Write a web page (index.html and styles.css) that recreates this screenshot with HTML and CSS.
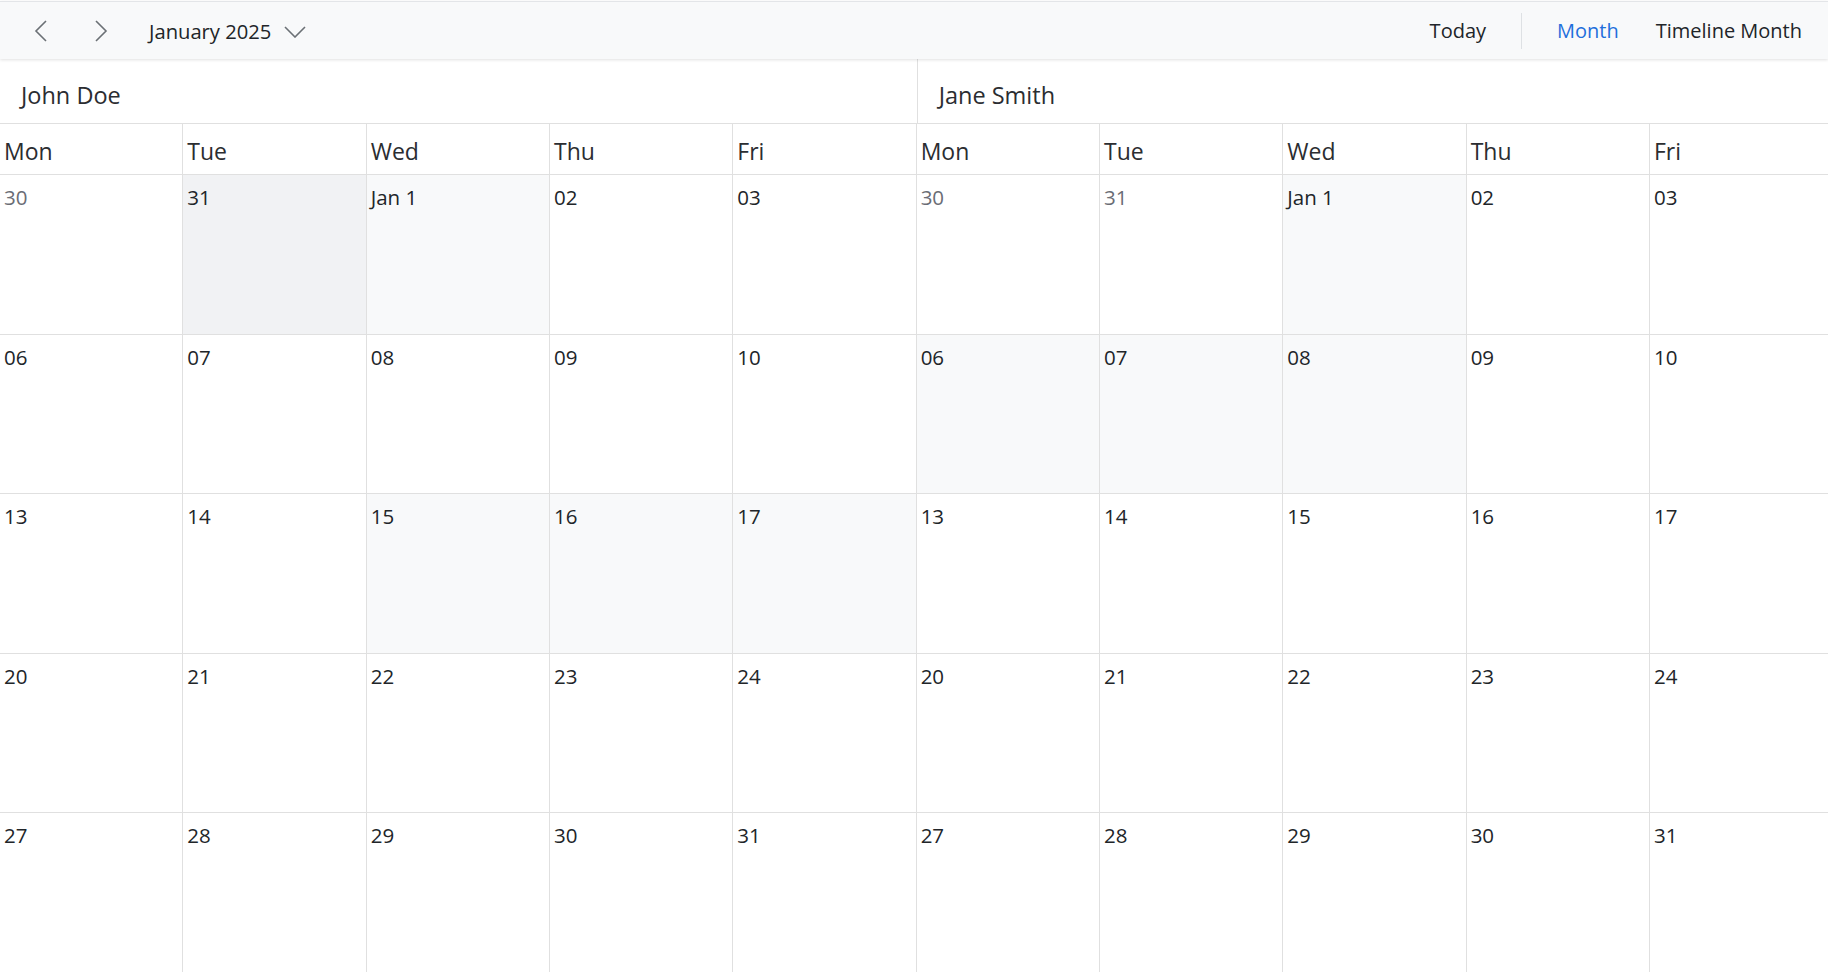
FILE: index.html
```html
<!DOCTYPE html>
<html>
<head>
<meta charset="utf-8">
<link rel="stylesheet" href="styles.css">
</head>
<body>
<div class="toolbar">
  <div class="tb-left">
    <button class="icon-btn" aria-label="Previous">
      <svg width="14" height="22" viewBox="0 0 14 22"><path d="M12 1 L2 11 L12 21" fill="none" stroke="#6b7075" stroke-width="1.6"/></svg>
    </button>
    <button class="icon-btn" aria-label="Next">
      <svg width="14" height="22" viewBox="0 0 14 22"><path d="M2 1 L12 11 L2 21" fill="none" stroke="#6b7075" stroke-width="1.6"/></svg>
    </button>
    <button class="date-btn">January 2025
      <svg class="caret" width="22" height="12" viewBox="0 0 22 12"><path d="M1 1 L11 11 L21 1" fill="none" stroke="#6b7075" stroke-width="1.6"/></svg>
    </button>
  </div>
  <div class="tb-right">
    <button class="text-btn today">Today</button>
    <span class="sep"></span>
    <button class="text-btn active">Month</button>
    <button class="text-btn">Timeline Month</button>
  </div>
</div>

<div class="viewport">
<div class="calendar">
  <div class="res res-first">John Doe</div>
  <div class="res">Jane Smith</div>

  <div class="dn">Mon</div><div class="dn">Tue</div><div class="dn">Wed</div><div class="dn">Thu</div><div class="dn">Fri</div>
  <div class="dn">Mon</div><div class="dn">Tue</div><div class="dn">Wed</div><div class="dn">Thu</div><div class="dn">Fri</div>

  <div class="cell"><span class="num other">30</span></div>
  <div class="cell dark"><span class="num">31</span></div>
  <div class="cell light"><span class="num">Jan 1</span></div>
  <div class="cell"><span class="num">02</span></div>
  <div class="cell"><span class="num">03</span></div>
  <div class="cell"><span class="num other">30</span></div>
  <div class="cell"><span class="num other">31</span></div>
  <div class="cell light"><span class="num">Jan 1</span></div>
  <div class="cell"><span class="num">02</span></div>
  <div class="cell"><span class="num">03</span></div>

  <div class="cell"><span class="num">06</span></div>
  <div class="cell"><span class="num">07</span></div>
  <div class="cell"><span class="num">08</span></div>
  <div class="cell"><span class="num">09</span></div>
  <div class="cell"><span class="num">10</span></div>
  <div class="cell light"><span class="num">06</span></div>
  <div class="cell light"><span class="num">07</span></div>
  <div class="cell light"><span class="num">08</span></div>
  <div class="cell"><span class="num">09</span></div>
  <div class="cell"><span class="num">10</span></div>

  <div class="cell"><span class="num">13</span></div>
  <div class="cell"><span class="num">14</span></div>
  <div class="cell light"><span class="num">15</span></div>
  <div class="cell light"><span class="num">16</span></div>
  <div class="cell light"><span class="num">17</span></div>
  <div class="cell"><span class="num">13</span></div>
  <div class="cell"><span class="num">14</span></div>
  <div class="cell"><span class="num">15</span></div>
  <div class="cell"><span class="num">16</span></div>
  <div class="cell"><span class="num">17</span></div>

  <div class="cell"><span class="num">20</span></div>
  <div class="cell"><span class="num">21</span></div>
  <div class="cell"><span class="num">22</span></div>
  <div class="cell"><span class="num">23</span></div>
  <div class="cell"><span class="num">24</span></div>
  <div class="cell"><span class="num">20</span></div>
  <div class="cell"><span class="num">21</span></div>
  <div class="cell"><span class="num">22</span></div>
  <div class="cell"><span class="num">23</span></div>
  <div class="cell"><span class="num">24</span></div>

  <div class="cell"><span class="num">27</span></div>
  <div class="cell"><span class="num">28</span></div>
  <div class="cell"><span class="num">29</span></div>
  <div class="cell"><span class="num">30</span></div>
  <div class="cell"><span class="num">31</span></div>
  <div class="cell"><span class="num">27</span></div>
  <div class="cell"><span class="num">28</span></div>
  <div class="cell"><span class="num">29</span></div>
  <div class="cell"><span class="num">30</span></div>
  <div class="cell"><span class="num">31</span></div>
</div>
</div>
</body>
</html>
```

FILE: styles.css
```css
* { box-sizing: border-box; }
html, body {
  margin: 0;
  padding: 0;
  width: 1828px;
  height: 972px;
  overflow: hidden;
  background: #ffffff;
  font-family: "Open Sans", "Noto Sans", sans-serif;
  color: #212529;
}
button {
  font-family: inherit;
  background: none;
  border: none;
  padding: 0;
  margin: 0;
  color: inherit;
  cursor: pointer;
}
.toolbar {
  position: relative;
  z-index: 2;
  margin-top: 1px;
  height: 58px;
  border-top: 1px solid #e3e5e8;
  background: #f8f9fa;
  box-shadow: 0 1px 3px rgba(0, 0, 0, 0.12);
  display: flex;
  align-items: center;
  justify-content: space-between;
}
.tb-left {
  display: flex;
  align-items: center;
  padding-left: 34px;
}
.icon-btn {
  width: 14px;
  height: 22px;
  display: flex;
  margin-right: 46px;
}
.icon-btn + .icon-btn { margin-right: 41px; }
.date-btn {
  display: flex;
  align-items: center;
  font-size: 20.2px;
  color: #212529;
}
.caret { margin-left: 13px; margin-top: 2px; }
.tb-right {
  display: flex;
  align-items: center;
  padding-right: 26px;
}
.text-btn {
  font-size: 20px;
  color: #212529;
}
.today { margin-right: 35px; }
.sep {
  width: 1px;
  height: 36px;
  background: #dee1e4;
  margin-right: 35px;
}
.text-btn.active { color: #1f6fdc; margin-right: 37px; }

.viewport {
  width: 1828px;
  overflow: hidden;
}
.calendar {
  width: 1833.33px;
  display: grid;
  grid-template-columns: repeat(10, 183.333px);
  grid-template-rows: 65px 51px 159.5px 159.5px 159.5px 159.5px 160px;
}
.res {
  grid-column: span 5;
  font-size: 23.5px;
  padding-left: 21px;
  padding-top: 20px;
  border-bottom: 1px solid #e0e0e0;
  border-left: 1px solid #e0e0e0;
  color: #2b2d31;
}
.res-first { border-left: none; padding-left: 21px; }
.dn {
  font-size: 23px;
  padding-left: 4px;
  padding-top: 11px;
  border-right: 1px solid #e0e0e0;
  border-bottom: 1px solid #e0e0e0;
  color: #2b2d31;
}
.cell {
  border-right: 1px solid #e0e0e0;
  border-bottom: 1px solid #e0e0e0;
  padding-left: 4px;
  padding-top: 8px;
}
.cell.dark { background: #f1f2f4; }
.cell.light { background: #f8f9fa; }
.num {
  font-size: 20.5px;
  color: #212529;
}
.num.other { color: #6a6d75; }
```
